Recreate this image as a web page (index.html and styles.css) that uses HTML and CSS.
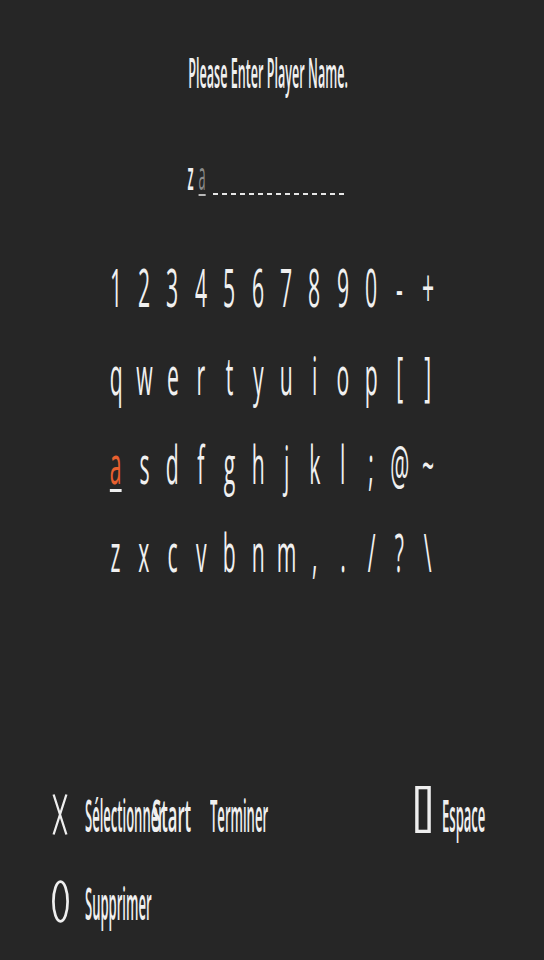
FILE: index.html
```html
<!DOCTYPE html>
<html lang="fr">
<head>
<meta charset="utf-8">
<title>Player Name</title>
<link rel="stylesheet" href="styles.css">
</head>
<body>
<div class="screen">
  <div class="title"><span class="sx">Please Enter Player Name.</span></div>

  <div class="entry">
    <span class="cell"><span class="sx">z</span></span>
    <span class="cell cur"><span class="sx">a</span></span>
    <span class="dashes"></span>
  </div>

  <div class="keys">
    <span class="key"><span class="sx">1</span></span>
    <span class="key"><span class="sx">2</span></span>
    <span class="key"><span class="sx">3</span></span>
    <span class="key"><span class="sx">4</span></span>
    <span class="key"><span class="sx">5</span></span>
    <span class="key"><span class="sx">6</span></span>
    <span class="key"><span class="sx">7</span></span>
    <span class="key"><span class="sx">8</span></span>
    <span class="key"><span class="sx">9</span></span>
    <span class="key"><span class="sx">0</span></span>
    <span class="key"><span class="sx">-</span></span>
    <span class="key"><span class="sx">+</span></span>

    <span class="key"><span class="sx">q</span></span>
    <span class="key"><span class="sx">w</span></span>
    <span class="key"><span class="sx">e</span></span>
    <span class="key"><span class="sx">r</span></span>
    <span class="key"><span class="sx">t</span></span>
    <span class="key"><span class="sx">y</span></span>
    <span class="key"><span class="sx">u</span></span>
    <span class="key"><span class="sx">i</span></span>
    <span class="key"><span class="sx">o</span></span>
    <span class="key"><span class="sx">p</span></span>
    <span class="key"><span class="sx">[</span></span>
    <span class="key"><span class="sx">]</span></span>

    <span class="key selected"><span class="sx">a</span></span>
    <span class="key"><span class="sx">s</span></span>
    <span class="key"><span class="sx">d</span></span>
    <span class="key"><span class="sx">f</span></span>
    <span class="key"><span class="sx">g</span></span>
    <span class="key"><span class="sx">h</span></span>
    <span class="key"><span class="sx">j</span></span>
    <span class="key"><span class="sx">k</span></span>
    <span class="key"><span class="sx">l</span></span>
    <span class="key"><span class="sx">;</span></span>
    <span class="key"><span class="sx">@</span></span>
    <span class="key"><span class="sx">~</span></span>

    <span class="key"><span class="sx">z</span></span>
    <span class="key"><span class="sx">x</span></span>
    <span class="key"><span class="sx">c</span></span>
    <span class="key"><span class="sx">v</span></span>
    <span class="key"><span class="sx">b</span></span>
    <span class="key"><span class="sx">n</span></span>
    <span class="key"><span class="sx">m</span></span>
    <span class="key"><span class="sx">,</span></span>
    <span class="key"><span class="sx">.</span></span>
    <span class="key"><span class="sx">/</span></span>
    <span class="key"><span class="sx">?</span></span>
    <span class="key"><span class="sx">\</span></span>
  </div>

  <div class="hint-row first">
    <svg class="icon icon-x" width="16" height="41" viewBox="0 0 16 41"><path d="M1.6 0.5 L14.4 40.5 M14.4 0.5 L1.6 40.5" fill="none" stroke="#eeeeee" stroke-width="2.3"/></svg>
    <span class="label l-select"><span class="sx">Sélectionner</span></span>
    <span class="label l-start"><span class="sx">Start</span></span>
    <span class="label l-end"><span class="sx">Terminer</span></span>
    <svg class="icon icon-sq" width="16" height="47" viewBox="0 0 16 47"><rect x="1.9" y="1.6" width="12.2" height="43.8" fill="none" stroke="#eeeeee" stroke-width="3.4"/></svg>
    <span class="label l-space"><span class="sx">Espace</span></span>
  </div>

  <div class="hint-row second">
    <svg class="icon icon-o" width="17" height="43" viewBox="0 0 17 43"><ellipse cx="8.5" cy="21.5" rx="7.1" ry="19.8" fill="none" stroke="#eeeeee" stroke-width="2.7"/></svg>
    <span class="label l-del"><span class="sx">Supprimer</span></span>
  </div>
</div>
</body>
</html>
```

FILE: styles.css
```css
html, body {
  margin: 0;
  padding: 0;
  background: #262626;
}

body {
  font-family: "Open Sans", "Noto Sans", "DejaVu Sans", sans-serif;
  font-weight: 600;
  color: #f0f0f0;
}

.screen {
  width: 544px;
  height: 960px;
  display: flex;
  flex-direction: column;
  overflow: hidden;
}

.sx {
  display: inline-block;
  white-space: nowrap;
  transform-origin: center;
}

/* title */
.title {
  padding-top: 51px;
  padding-right: 7px;
  height: 42px;
  display: flex;
  justify-content: center;
  font-size: 42px;
  line-height: 42px;
}
.title .sx {
  transform: scaleX(0.30);
}

/* name entry */
.entry {
  margin-top: 62px;
  height: 40px;
  padding-left: 184.5px;
  display: flex;
  font-size: 40px;
  line-height: 40px;
}
.entry .cell {
  width: 12px;
  display: flex;
  justify-content: center;
}
.entry .sx {
  transform: scaleX(0.32);
}
.entry .cur .sx {
  color: #8a8a8a;
  font-weight: 400;
  text-decoration: underline;
  text-decoration-color: #b8b8b8;
  text-decoration-thickness: 2px;
  text-underline-offset: 4px;
}
.entry .dashes {
  align-self: flex-end;
  margin-left: 4.5px;
  margin-bottom: 0;
  width: 133px;
  height: 2px;
  background: repeating-linear-gradient(90deg, #e6e6e6 0 5px, transparent 5px 9px);
}

/* keyboard */
.keys {
  margin-top: 66px;
  align-self: center;
  display: grid;
  grid-template-columns: repeat(12, 28.4px);
  grid-auto-rows: 88.33px;
  font-size: 53px;
  line-height: 52px;
  font-weight: 400;
}
.key {
  display: flex;
  justify-content: center;
  align-items: flex-start;
}
.key .sx {
  transform: scaleX(0.40);
}
.key.selected .sx {
  color: #e8602f;
  text-decoration: underline;
  text-decoration-color: #eeeeee;
  text-decoration-thickness: 3px;
  text-underline-offset: 5px;
}

/* button hints */
.hint-row {
  display: flex;
  align-items: flex-start;
  height: 45px;
  font-size: 45px;
  line-height: 45px;
}
.hint-row.first {
  margin-top: 178px;
}
.hint-row.second {
  margin-top: 43px;
}
.icon {
  flex: none;
}
.icon-x {
  margin-left: 52px;
  margin-top: 2px;
}
.icon-o {
  margin-left: 51.5px;
}
.icon-sq {
  margin-top: -6px;
}
.label {
  flex: none;
  display: block;
}
.label .sx {
  transform-origin: left center;
  transform: scaleX(0.29);
}
.l-select {
  margin-left: 17px;
  width: 67px;
}
.l-start {
  width: 58px;
}
.l-start .sx {
  transform: scaleX(0.37);
}
.l-end {
  width: 205px;
}
.l-space {
  margin-left: 11px;
}
.l-del {
  margin-left: 16.5px;
}
```
